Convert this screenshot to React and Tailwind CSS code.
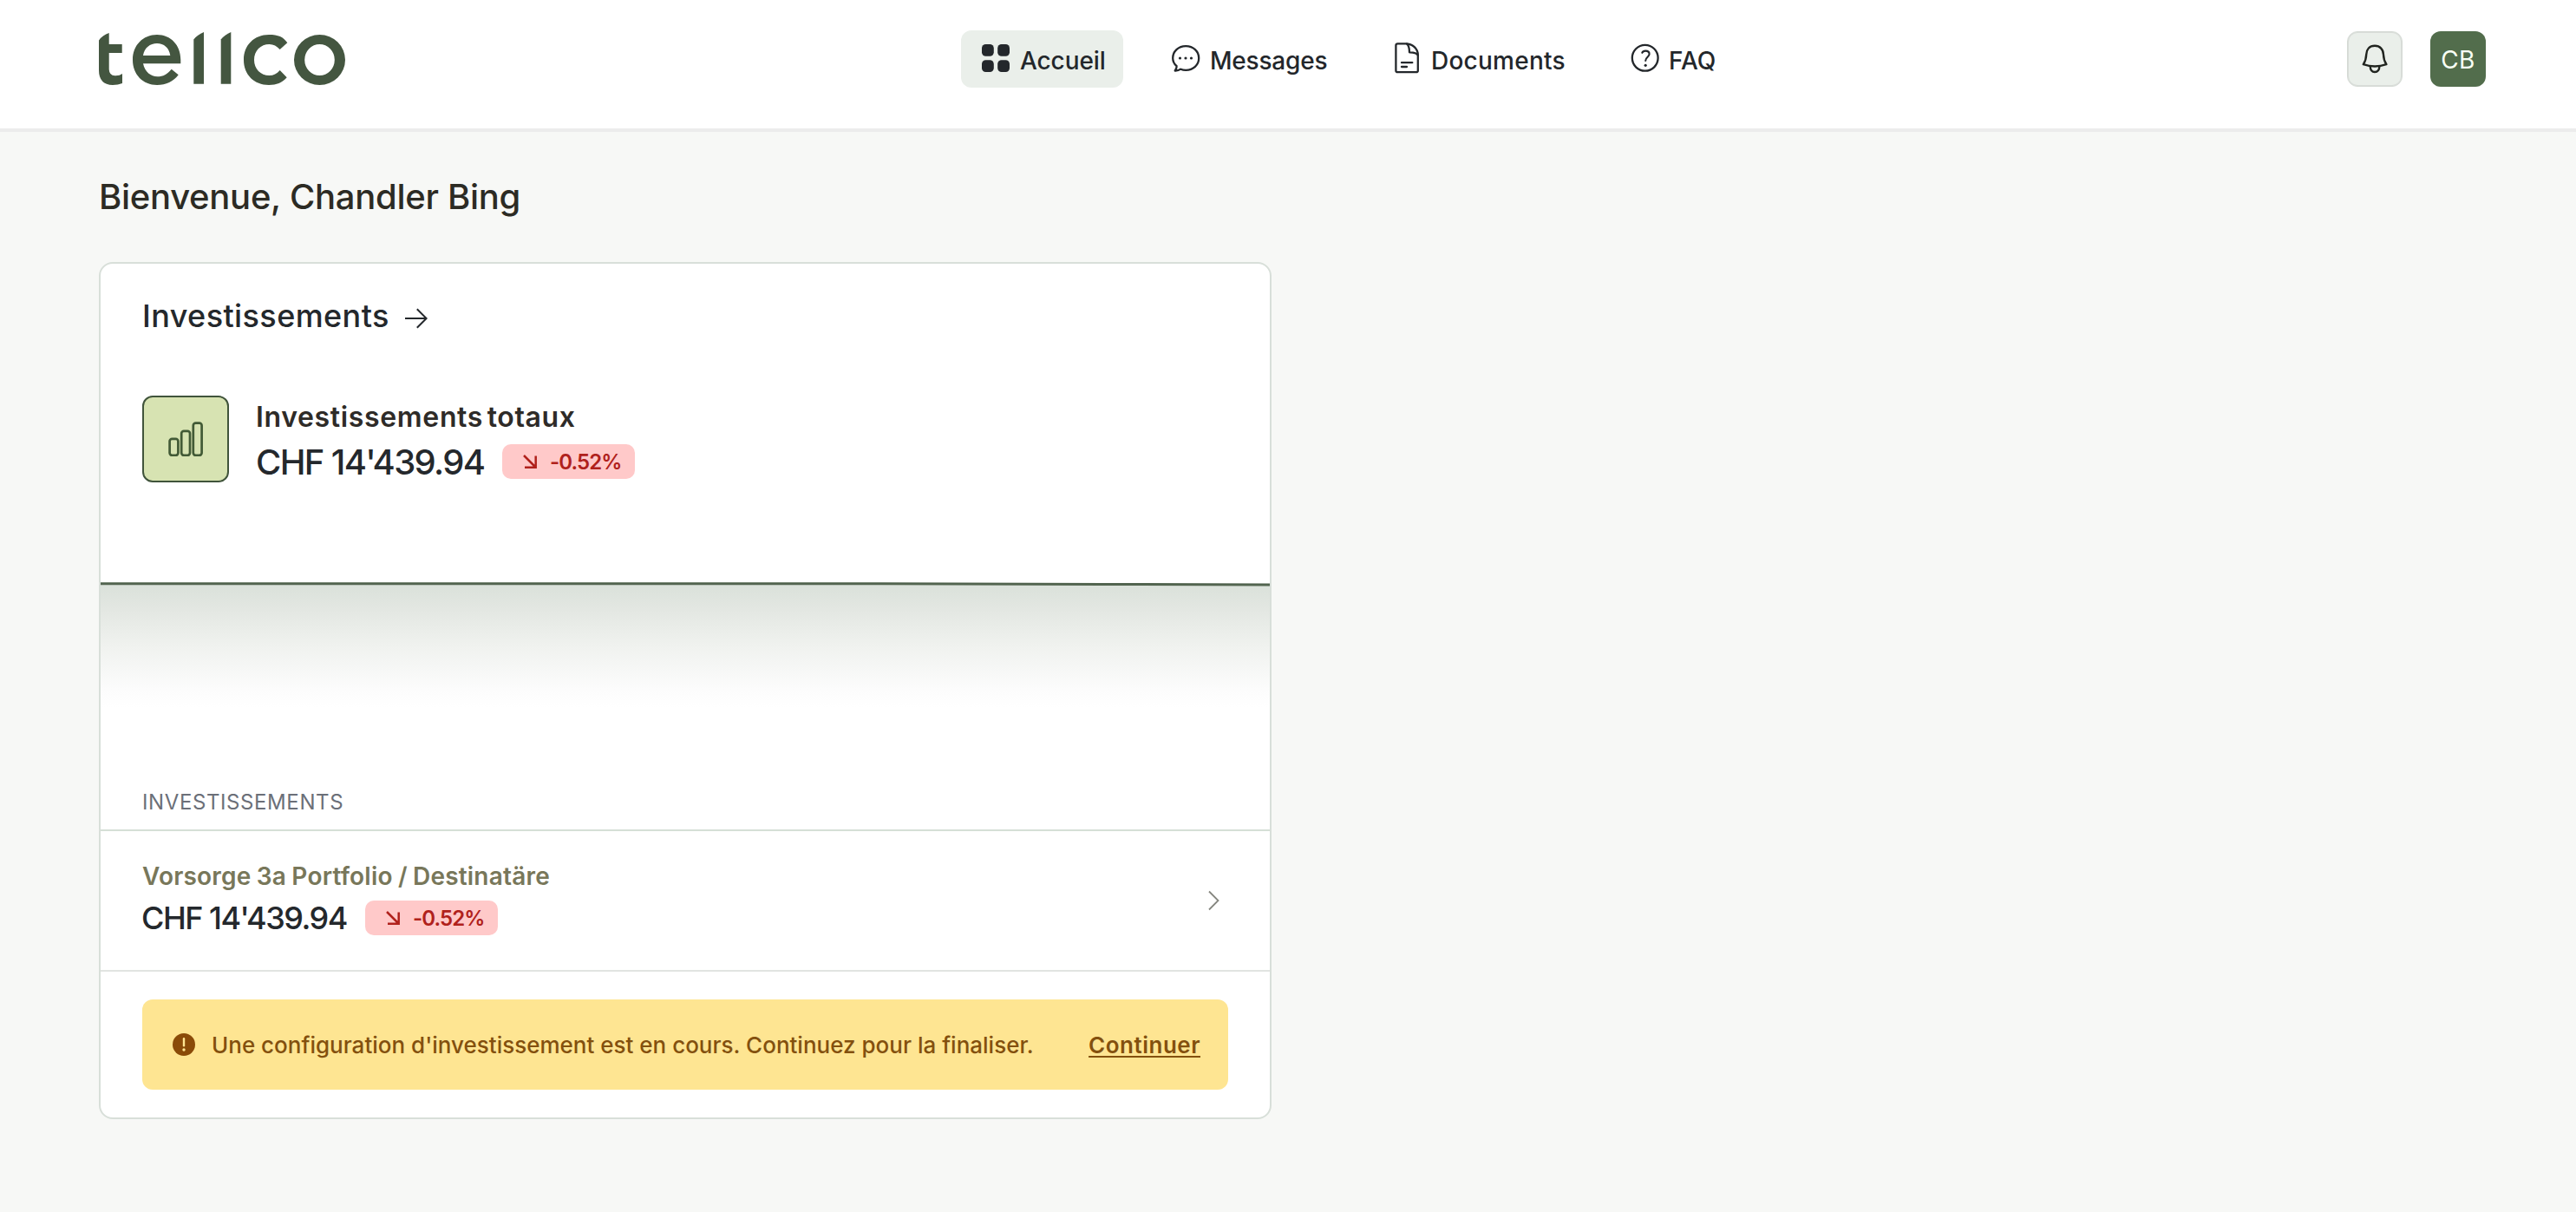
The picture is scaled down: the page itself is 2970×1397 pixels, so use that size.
function Logo() {
  return (
    <svg role="img" aria-label="tellco" className="mt-[36px] h-[64px] w-[284px] shrink-0" viewBox="0 0 284 64" fill="#445640">
      <path d="M0 10.5Q4 4.5 11.7 2V15H26.7V25H11.7V44Q12 51 18.5 51.3Q24 51.5 27 49V60Q22 62 16 62Q0 61.500 0 45Z" />
      <path
        fillRule="evenodd"
        d="M94.300 37.300H51C53 47 60 52.300 67.500 52.300C74 52.300 79 49.500 83.700 43.700L91.700 50.300C86 58 77.500 62 67 62C51 62 39 50 39 33C39 16 51 4 67 4C83 4 94.300 16 94.300 33ZM51 28H82.300C81 19 75 14 67 14C59 14 52.500 19 51 28Z"
      />
      <path d="M109.300 9.500Q113.500 4 121 1V60.700H109.300Z" />
      <path d="M140.700 9.500Q145 4 152.300 1V60.700H140.700Z" />
      <path d="M217.300 13.300L208.700 21C205 17 201.500 15 196.500 15C186.500 15 179 22.500 179 33C179 43.500 186.500 51 196.500 51C201.500 51 205 49 208.700 45L216.700 53.300C211 59.500 205 62 196 62C179 62 167 50 167 33C167 16 179 4 196 4C207 4 212.500 6.500 217.300 13.300Z" />
      <path
        fillRule="evenodd"
        d="M254.500 4A29.500 29 0 0 1 254.500 62A29.500 29 0 0 1 254.500 4ZM254.500 15A17.300 18 0 0 0 254.500 51A17.300 18 0 0 0 254.500 15Z"
      />
    </svg>
  );
}

const iconClass = "mb-[2px] size-8 shrink-0 overflow-visible";

function HomeIcon() {
  return (
    <svg className={iconClass} viewBox="0 0 32 32" fill="currentColor">
      <rect width="13.800" height="13.800" rx="4.500" />
      <rect x="18.200" width="13.800" height="13.800" rx="4.500" />
      <rect y="18.200" width="13.800" height="13.800" rx="4.500" />
      <rect x="18.200" y="18.200" width="13.800" height="13.800" rx="4.500" />
    </svg>
  );
}

function MessageIcon() {
  return (
    <svg className={iconClass} viewBox="0 0 32 32" fill="none" stroke="currentColor" strokeWidth="2.300" strokeLinejoin="round">
      <path d="M16.200 2.200C24.800 2.200 31.200 8.300 31.200 16C31.200 23.800 24.800 29.800 16.200 29.800C14 29.800 12 29.400 10.200 28.700C8.500 30 6.300 30.600 3.700 30.500C5.200 28.800 5.800 27 5.600 25.200C2.800 22.800 1.200 19.700 1.200 16C1.200 8.300 7.600 2.200 16.200 2.200Z" />
      <g fill="currentColor" stroke="none">
        <circle cx="9.500" cy="16" r="1.600" />
        <circle cx="16" cy="16" r="1.600" />
        <circle cx="22.500" cy="16" r="1.600" />
      </g>
    </svg>
  );
}

function DocumentIcon() {
  return (
    <svg className={iconClass} viewBox="0 0 32 32" fill="none" stroke="currentColor" strokeWidth="2.300" strokeLinecap="round" strokeLinejoin="round">
      <path d="M5.400 -0.600H15C22.500 -0.600 28.800 5.200 28.800 12.500V30.200Q28.800 32.200 26.800 32.200H5.400Q3.400 32.200 3.400 30.200V1.400Q3.400 -0.600 5.400 -0.600Z" />
      <path d="M16 -0.500C18.300 1.200 19 3.500 19 9.300C24.500 9.200 27.300 9.800 28.700 12.500" />
      <path d="M10 21.200H22.300M10 26H16" />
    </svg>
  );
}

function FaqIcon() {
  return (
    <svg className={iconClass} viewBox="0 0 32 32" fill="none" stroke="currentColor" strokeWidth="2.300" strokeLinecap="round" strokeLinejoin="round">
      <circle cx="16.700" cy="15.800" r="14.900" />
      <path d="M13.300 9.800C14 8.300 15.400 7.600 17.200 7.600C19.800 7.600 21.600 9 21.600 11.200C21.600 14.700 17.200 14.800 17.200 19" strokeWidth="2.100" />
      <circle cx="17.200" cy="24.300" r="1.600" fill="currentColor" stroke="none" />
    </svg>
  );
}

function BellIcon() {
  return (
    <svg className="size-[62px] overflow-visible" viewBox="1 1 62 62" fill="none" stroke="#20241f" strokeWidth="2.400" strokeLinecap="round" strokeLinejoin="round">
      <path d="M32 16.800C26 16.800 22.400 21 22.200 27C22 32.500 21 35 18.800 38.200C27 41 37 41 45.400 38.200C43.200 35 42.200 32.500 42 27C41.800 21 38 16.800 32 16.800Z" />
      <path d="M26.700 40.500C26.900 44.500 29 47 32 47C35 47 37.200 44.500 37.400 40.500" />
    </svg>
  );
}

function ChangeBadge() {
  return (
    <span className="flex h-10 w-[153px] shrink-0 items-center gap-[15px] rounded-[10px] bg-[#ffc9c9] pl-6 text-[#b0211c]">
      <svg className="size-4 shrink-0" viewBox="0 0 16 16" fill="none" stroke="currentColor" strokeWidth="2.500">
        <path d="M1 1L14.500 14.500M14.700 1.500V14.700H2" />
      </svg>
      <span className="pt-[2px] text-[24px] leading-8 font-semibold tracking-[-0.9px] whitespace-nowrap">-0.52%</span>
    </span>
  );
}

function Header() {
  return (
    <header className="flex h-[152px] items-start border-b-4 border-[#ececec] bg-white pr-[104px] pl-[114px] text-[28px] font-medium text-[#23272b]">
      <Logo />
      <nav className="mt-[35px] ml-[710px] flex gap-8 whitespace-nowrap">
        <a className="flex h-[66px] w-[187px] items-center gap-3 rounded-xl bg-[#eaefea] pl-6">
          <HomeIcon />
          <span className="pt-[3px] tracking-[-0.1px]">Accueil</span>
        </a>
        <a className="flex h-[66px] w-[223px] items-center gap-3 pl-6">
          <MessageIcon />
          <span className="pt-[3px] tracking-[-0.2px]">Messages</span>
        </a>
        <a className="flex h-[66px] w-[242px] items-center gap-3 pl-6">
          <DocumentIcon />
          <span className="pt-[3px] tracking-[0.25px]">Documents</span>
        </a>
        <a className="flex h-[66px] items-center gap-3 pl-6">
          <FaqIcon />
          <span className="pt-[3px]">FAQ</span>
        </a>
      </nav>
      <div className="mt-[36px] ml-auto flex gap-8">
        <button aria-label="Notifications" className="size-16 rounded-xl border border-[#d5dad5] bg-[#eaefea] shadow-[inset_0_0_0_1px_#d9ddd9]">
          <BellIcon />
        </button>
        <div className="flex size-16 items-center justify-center rounded-xl bg-[#526d4c] pt-[2px] font-normal tracking-[0.3px] text-[#f8fff5]">CB</div>
      </div>
    </header>
  );
}

function PerformanceChart() {
  return (
    <svg className="mt-[100px] block h-[244px] w-full" viewBox="0 0 1348 244" preserveAspectRatio="none">
      <defs>
        <linearGradient id="performance-fill" x1="0" y1="18" x2="0" y2="160" gradientUnits="userSpaceOnUse">
          <stop offset="0" stopColor="#dae1da" />
          <stop offset="0.200" stopColor="#e3e7e2" />
          <stop offset="0.500" stopColor="#f0f2ef" />
          <stop offset="0.850" stopColor="#fcfcfc" />
          <stop offset="1" stopColor="#ffffff" />
        </linearGradient>
      </defs>
      <path d="M0 16.700H850L1200 17.500L1348 17.900V244H0Z" fill="url(#performance-fill)" />
      <path d="M0 16.700H850L1200 17.500L1348 17.900" fill="none" stroke="#52644f" strokeWidth="3" />
    </svg>
  );
}

export default function App() {
  return (
    <div className="min-h-[1397px] bg-[#f7f8f6] font-['Inter',sans-serif]">
      <Header />
      <main className="px-[114px] pt-[51px]">
        <h1 className="text-[40px] leading-[48px] font-medium tracking-[-0.28px] text-[#2c2b24]">Bienvenue, Chandler Bing</h1>

        <section className="mt-[51px] w-[1352px] rounded-2xl border-2 border-[#d8dfd9] bg-white">
          <div className="px-12 pt-[38px]">
            <h2 className="flex items-center gap-[18px] text-[36px] leading-[44px] font-medium tracking-[0.4px] text-[#24282c]">
              Investissements
              <svg className="mt-[6px] h-6 w-[26px]" viewBox="0 0 26 24" fill="none" stroke="currentColor" strokeWidth="2">
                <path d="M0 12H24.500M13.800 1.200L24.600 12L13.800 22.800" />
              </svg>
            </h2>

            <div className="mt-[70px] flex gap-[31px]">
              <div className="flex size-[100px] items-center justify-center rounded-xl border-2 border-[#40543b] bg-[#d7e3b2]">
                <svg className="size-10" viewBox="0 0 40 40" fill="none" stroke="#425a36" strokeWidth="2.700">
                  <rect x="1.600" y="19.800" width="9.800" height="19" rx="2.800" />
                  <rect x="15.200" y="10.800" width="9.800" height="28" rx="2.800" />
                  <rect x="28.800" y="1.600" width="9.800" height="37.200" rx="2.800" />
                </svg>
              </div>
              <div className="pt-[5px]">
                <p className="text-[32px] leading-10 font-semibold tracking-[0.65px] [word-spacing:-4px] text-[#2e2b28]">Investissements totaux</p>
                <div className="mt-[7px] flex h-12 items-center">
                  <span className="w-[284px] pt-px text-[40px] leading-[48px] font-medium tracking-[-1.66px] whitespace-nowrap text-[#24282c]">CHF 14'439.94</span>
                  <ChangeBadge />
                </div>
              </div>
            </div>
          </div>

          <PerformanceChart />

          <h3 className="border-b-2 border-[#d5dfd6] px-12 pt-[9px] pb-[15px] text-[24px] leading-8 tracking-[0.6px] text-[#6b6f78]">INVESTISSEMENTS</h3>

          <div className="flex h-[162px] items-center justify-between border-b-2 border-[#e1e4e1] pr-[58px] pl-12">
            <div className="mb-1">
              <p className="text-[28px] leading-9 font-semibold tracking-[0.2px] [word-spacing:-1px] text-[#78775a]">Vorsorge 3a Portfolio / Destinatäre</p>
              <div className="mt-2 flex h-11 items-center">
                <span className="-ml-px w-[258px] text-[36px] leading-[44px] font-medium tracking-[-1.5px] whitespace-nowrap text-[#24282c]">CHF 14'439.94</span>
                <ChangeBadge />
              </div>
            </div>
            <svg className="h-6 w-[13px]" viewBox="0 0 13 24" fill="none" stroke="#85867f" strokeWidth="1.800">
              <path d="M1 1.500L11.500 12L1 22.500" />
            </svg>
          </div>

          <div className="px-12 py-8">
            <div className="flex h-[104px] items-center rounded-xl bg-[#fee592] pr-8 pl-[35px] text-[26px] font-medium text-[#83500e]">
              <svg className="size-[26px] shrink-0" viewBox="0 0 26 26">
                <circle cx="13" cy="13" r="13" fill="#8a4b08" />
                <path d="M13 6.300V14.200" stroke="#fee592" strokeWidth="2.400" strokeLinecap="round" />
                <circle cx="13" cy="19" r="1.700" fill="#fee592" />
              </svg>
              <p className="ml-[19px] pt-px whitespace-nowrap">Une configuration d'investissement est en cours. Continuez pour la finaliser.</p>
              <a className="ml-auto pt-px font-semibold tracking-[0.5px] whitespace-nowrap underline decoration-2 underline-offset-[3px]">Continuer</a>
            </div>
          </div>
        </section>
      </main>
    </div>
  );
}
